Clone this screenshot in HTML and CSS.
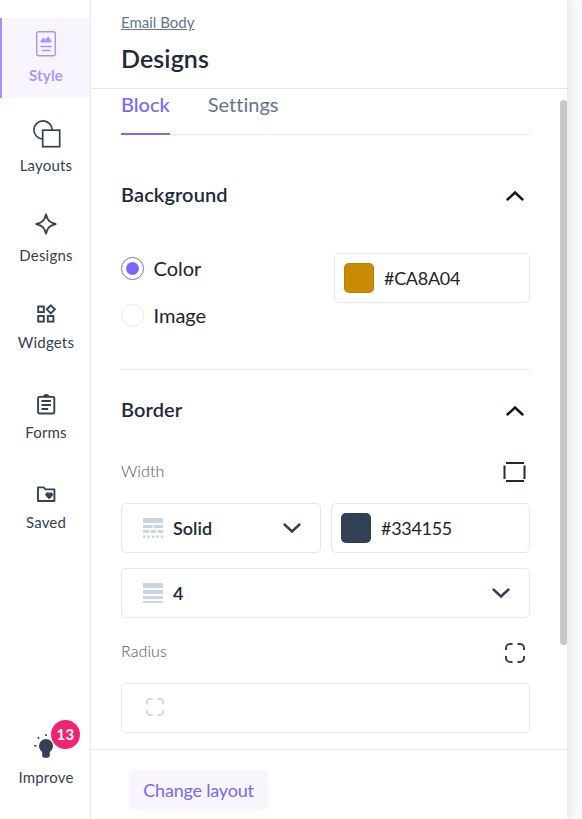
FILE: index.html
```html
<!DOCTYPE html>
<html lang="en">
<head>
    <meta charset="UTF-8">
    <meta name="viewport" content="width=device-width, initial-scale=1.0">
    <title>Email Editor</title>
    <link rel="stylesheet" href="styles.css">
</head>
<body>
    <div class="editor">
        <nav class="sidebar">
            <a class="nav-item active">
                <svg class="nav-icon" width="30" height="30" viewBox="0 0 30 30" fill="none" stroke="currentColor" stroke-width="1.4">
                    <rect x="5.7" y="2.7" width="18.6" height="24" rx="2"/>
                    <path d="M9.5 13.5V12l2.700-3.300 2 2 3-3.300 3.300 4.600v1.500z" fill="currentColor" stroke="none"/>
                    <path d="M9.8 17.500h10.400M11.500 21.500h7.500" stroke-linecap="round"/>
                </svg>
                <span>Style</span>
            </a>
            <a class="nav-item">
                <svg class="nav-icon" width="30" height="30" viewBox="0 0 30 30" fill="none" stroke="currentColor" stroke-width="1.7">
                    <path d="M11.5 20A9.1 9.1 0 1 1 21.1 11"/>
                    <rect x="11.7" y="11.2" width="17" height="16.5"/>
                </svg>
                <span>Layouts</span>
            </a>
            <a class="nav-item">
                <svg class="nav-icon" width="30" height="30" viewBox="0 0 30 30" fill="none" stroke="currentColor" stroke-width="1.9" stroke-linejoin="round">
                    <path d="M15 5.500C16.400 11.300 18.800 13.600 24.700 15C18.800 16.400 16.400 18.700 15 24.500C13.600 18.700 11.200 16.400 5.300 15C11.200 13.600 13.600 11.300 15 5.500z"/>
                </svg>
                <span>Designs</span>
            </a>
            <a class="nav-item small">
                <svg class="nav-icon" width="24" height="24" viewBox="0 0 24 24" fill="none" stroke="currentColor" stroke-width="1.9">
                    <rect x="4.200" y="4.500" width="5.600" height="5.600"/>
                    <rect x="4.200" y="14" width="5.600" height="5.600"/>
                    <rect x="13.800" y="14" width="5.600" height="5.600"/>
                    <path d="M16.800 3.300l4 4-4 4-4-4z"/>
                </svg>
                <span>Widgets</span>
            </a>
            <a class="nav-item small">
                <svg class="nav-icon" width="24" height="24" viewBox="0 0 24 24" fill="none" stroke="currentColor" stroke-width="1.9">
                    <rect x="4.100" y="4.900" width="16.200" height="16.600" rx="1.200"/>
                    <path d="M9.500 4.600a2.700 2.200 0 0 1 5.400 0z" fill="currentColor" stroke-width="1"/>
                    <path d="M7.500 9h9.400M7.500 13h9.400M7.500 17h6.600"/>
                </svg>
                <span>Forms</span>
            </a>
            <a class="nav-item small">
                <svg class="nav-icon" width="24" height="24" viewBox="0 0 24 24" fill="none" stroke="currentColor" stroke-width="1.9" stroke-linejoin="round">
                    <path d="M4 5.400h5.600l2 2h8.800v11.600H4z"/>
                    <path d="M15.200 16.900l-3.100-3.100a1.900 1.900 0 0 1 3.100-2.300 1.900 1.900 0 0 1 3.100 2.300z" fill="currentColor" stroke-width=".8"/>
                </svg>
                <span>Saved</span>
            </a>
            <a class="nav-item small improve">
                <span class="icon-wrap">
                    <svg class="nav-icon" width="24" height="24" viewBox="0 0 24 24" fill="currentColor">
                        <path d="M12 4a7 7 0 0 1 7 7c0 2.600-1.300 4.300-3.200 6v3a2.600 2.600 0 0 1-2.600 2.800h-2.400A2.600 2.600 0 0 1 8.200 20v-3C6.300 15.300 5 13.600 5 11a7 7 0 0 1 7-7z"/>
                        <path d="M12 1v-2M5.200 3.700L3.700 2.200M2.500 10.800H.2" fill="none" stroke="currentColor" stroke-width="1.600"/>
                    </svg>
                    <span class="badge">13</span>
                </span>
                <span>Improve</span>
            </a>
        </nav>

        <main class="panel">
            <header class="panel-header">
                <a class="breadcrumb">Email Body</a>
                <h1>Designs</h1>
            </header>

            <div class="panel-body">
                <div class="tabs">
                    <div class="tab active">Block</div>
                    <div class="tab">Settings</div>
                </div>

                <section class="section background">
                    <div class="section-title">
                        <h2>Background</h2>
                        <svg class="chevron" width="20" height="12" viewBox="0 0 20 12"><path d="M2.500 9.500l7.500-7 7.500 7"/></svg>
                    </div>
                    <div class="background-row">
                        <div class="radios">
                            <label class="radio checked"><span class="dot"></span>Color</label>
                            <label class="radio"><span class="dot"></span>Image</label>
                        </div>
                        <div class="field color-field">
                            <span class="swatch gold"></span>
                            <span>#CA8A04</span>
                        </div>
                    </div>
                </section>

                <section class="section border">
                    <div class="section-title">
                        <h2>Border</h2>
                        <svg class="chevron" width="20" height="12" viewBox="0 0 20 12"><path d="M2.500 9.500l7.500-7 7.500 7"/></svg>
                    </div>
                    <div class="label-row">
                        <span>Width</span>
                        <svg class="sides" width="24" height="22" viewBox="0 0 24 22"><path d="M3 2h18M3 20h18M1.500 4.500v13.500M21.500 4.500v13.500"/></svg>
                    </div>
                    <div class="field-row">
                        <div class="field select">
                            <svg class="lines" width="20" height="20" viewBox="0 0 20 20">
                                <path d="M0 0h20v5H0zM0 7h9.500v3H0zM10.500 7H20v3h-9.500zM0 12h6v3H0zM7.500 12h5.500v3H7.500zM14.500 12H20v3h-5.500zM0 17.500h2.500V20H0zM4.400 17.500h2.500V20H4.400zM8.800 17.500h2.500V20H8.800zM13.200 17.500h2.500V20h-2.500zM17.500 17.500H20V20h-2.500z"/>
                            </svg>
                            <span>Solid</span>
                            <svg class="chevron down" width="20" height="12" viewBox="0 0 20 12"><path d="M2.500 2.500l7.500 7 7.500-7"/></svg>
                        </div>
                        <div class="field color-field">
                            <span class="swatch slate"></span>
                            <span>#334155</span>
                        </div>
                    </div>
                    <div class="field select">
                        <svg class="lines" width="20" height="20" viewBox="0 0 20 20">
                            <path d="M0 0h20v5H0zM0 7h20v4H0zM0 13h20v3H0zM0 18h20v2H0z"/>
                        </svg>
                        <span>4</span>
                        <svg class="chevron down" width="20" height="12" viewBox="0 0 20 12"><path d="M2.500 2.500l7.500 7 7.500-7"/></svg>
                    </div>
                    <div class="label-row radius">
                        <span>Radius</span>
                        <svg class="corners" width="22" height="22" viewBox="0 0 22 22"><path d="M2 8V6a4 4 0 0 1 4-4h2.500M13.500 2H16a4 4 0 0 1 4 4v2M20 14v2a4 4 0 0 1-4 4h-2.500M8.500 20H6a4 4 0 0 1-4-4v-2"/></svg>
                    </div>
                    <div class="field radius-field">
                        <svg class="corners" width="20" height="20" viewBox="0 0 22 22"><path d="M2 8V6a4 4 0 0 1 4-4h2.500M13.500 2H16a4 4 0 0 1 4 4v2M20 14v2a4 4 0 0 1-4 4h-2.500M8.500 20H6a4 4 0 0 1-4-4v-2"/></svg>
                    </div>
                </section>
                <div class="scrollbar"></div>
            </div>

            <footer class="panel-footer">
                <button>Change layout</button>
            </footer>
        </main>
    </div>
</body>
</html>
```
FILE: styles.css
```css
* {
    margin: 0;
    padding: 0;
    box-sizing: border-box;
}

body {
    font-family: Lato, sans-serif;
    font-variant-ligatures: none;
    background: #f8f9fb;
    color: #1e293b;
    height: 100vh;
    overflow: hidden;
}

.editor {
    display: flex;
    width: 567px;
    height: 100vh;
    background: white;
    box-shadow: 0 0 12px rgba(15, 23, 42, 0.12);
}

/* Sidebar */
.sidebar {
    display: flex;
    flex-direction: column;
    gap: 10px;
    width: 91px;
    padding: 18px 0;
    border-right: 1px solid #e2e8f0;
}

.nav-item {
    display: flex;
    flex-direction: column;
    align-items: center;
    flex: none;
    gap: 6px;
    height: 80px;
    padding-top: 11px;
    padding-left: 2px;
    color: #334155;
    font-size: 15px;
    letter-spacing: 0.2px;
    line-height: 20px;
}

.nav-item.active {
    padding-left: 0;
    border-left: 2px solid #a192f8;
    background: #f8f5ff;
    color: #a695ff;
    font-weight: 700;
}

.nav-item.small {
    padding-top: 14px;
}

.nav-item.improve {
    margin-top: auto;
    gap: 8px;
}

.nav-icon {
    display: block;
    overflow: visible;
}

.icon-wrap {
    position: relative;
}

.badge {
    position: absolute;
    left: 17px;
    top: -15px;
    width: 29px;
    height: 29px;
    border-radius: 50%;
    background: #f0246e;
    color: white;
    font-size: 15px;
    font-weight: 700;
    line-height: 29px;
    text-align: center;
}

/* Panel */
.panel {
    display: flex;
    flex-direction: column;
    flex: 1;
}

.panel-header {
    height: 89px;
    padding: 12px 30px 0;
    border-bottom: 1px solid #e2e8f0;
}

.breadcrumb {
    display: block;
    color: #64748b;
    font-size: 15px;
    line-height: 20px;
    text-decoration: underline;
}

h1 {
    margin-top: 11px;
    font-size: 25px;
    font-weight: 600;
    letter-spacing: 0.1px;
    line-height: 30px;
}

.panel-body {
    position: relative;
    flex: 1;
    padding: 0 37px 0 30px;
}

.scrollbar {
    position: absolute;
    right: 0;
    top: 11px;
    width: 7px;
    height: 545px;
    border-radius: 4px;
    background: #c8c8c8;
}

.tabs {
    display: flex;
    gap: 38px;
    height: 46px;
    border-bottom: 1px solid #e2e8f0;
}

.tab {
    height: 46px;
    padding-top: 3px;
    color: #64748b;
    font-size: 20px;
    line-height: 24px;
}

.tab.active {
    border-bottom: 2px solid #7a68fa;
    color: #7a68fa;
    font-weight: 500;
}

.section-title {
    display: flex;
    align-items: center;
    justify-content: space-between;
    height: 30px;
    padding-right: 5px;
}

h2 {
    margin-top: -4px;
    font-size: 20px;
    font-weight: 600;
    letter-spacing: 0.1px;
}

.chevron path {
    fill: none;
    stroke: #0f172a;
    stroke-width: 2.4;
    stroke-linecap: round;
}

.chevron.down path {
    stroke: #334155;
}

.background {
    height: 235px;
    padding-top: 46px;
    border-bottom: 1px solid #e2e8f0;
}

.background-row {
    display: flex;
    justify-content: space-between;
    padding-top: 42px;
}

.radios {
    display: flex;
    flex-direction: column;
    gap: 23px;
    padding-top: 3px;
}

.radio {
    display: flex;
    align-items: center;
    gap: 9.5px;
    height: 24px;
    color: #212529;
    font-size: 20px;
}

.dot {
    display: flex;
    align-items: center;
    justify-content: center;
    width: 23px;
    height: 23px;
    border: 1px solid #e2e8f0;
    border-radius: 50%;
}

.checked .dot {
    border-color: #7a68fa;
}

.checked .dot::before {
    content: "";
    width: 13px;
    height: 13px;
    border-radius: 50%;
    background: #7a68fa;
}

.field {
    display: flex;
    align-items: center;
    height: 50px;
    border: 1px solid #e2e8f0;
    border-radius: 5px;
    font-size: 18px;
}

.color-field {
    gap: 10px;
    width: 196px;
    padding-left: 9px;
    color: #212529;
    letter-spacing: -0.3px;
}

.swatch {
    width: 30px;
    height: 30px;
    border: 1px solid rgba(0, 0, 0, 0.08);
    border-radius: 5px;
}

.gold {
    background: #ca8a04;
}

.slate {
    background: #334155;
}

.border {
    padding-top: 26px;
}

.label-row {
    display: flex;
    align-items: center;
    justify-content: space-between;
    height: 24px;
    margin-top: 34px;
    padding-right: 3px;
    color: #475569;
    font-size: 16px;
    font-weight: 300;
    letter-spacing: 0.1px;
}

.label-row span {
    margin-top: -4px;
}

.label-row.radius {
    margin-top: 23px;
    padding-right: 4px;
}

.label-row.radius span {
    margin-top: -6px;
}

.sides path,
.corners path {
    fill: none;
    stroke: #334155;
    stroke-width: 2;
}

.sides path {
    stroke: #1e293b;
}

.field-row {
    display: flex;
    gap: 10px;
    margin: 19px 0 15px;
}

.field-row .select {
    width: 200px;
}

.field-row .color-field {
    width: 199px;
}

.select {
    gap: 10px;
    padding: 0 18px 0 21px;
    font-weight: 600;
}

.select .chevron {
    margin-left: auto;
}

.lines {
    fill: #cbd5e1;
}

.radius-field {
    margin-top: 18px;
    padding: 0 0 3px 23px;
}

.radius-field .corners path {
    stroke: #cbd5e1;
}

.panel-footer {
    height: 70px;
    padding: 20px 38px 0;
    border-top: 1px solid #e2e8f0;
}

button {
    width: 139px;
    height: 40px;
    border: none;
    border-radius: 5px;
    background: #f8f5ff;
    color: #7a68fa;
    font-family: inherit;
    font-size: 18px;
    letter-spacing: -0.2px;
    cursor: pointer;
}
```
